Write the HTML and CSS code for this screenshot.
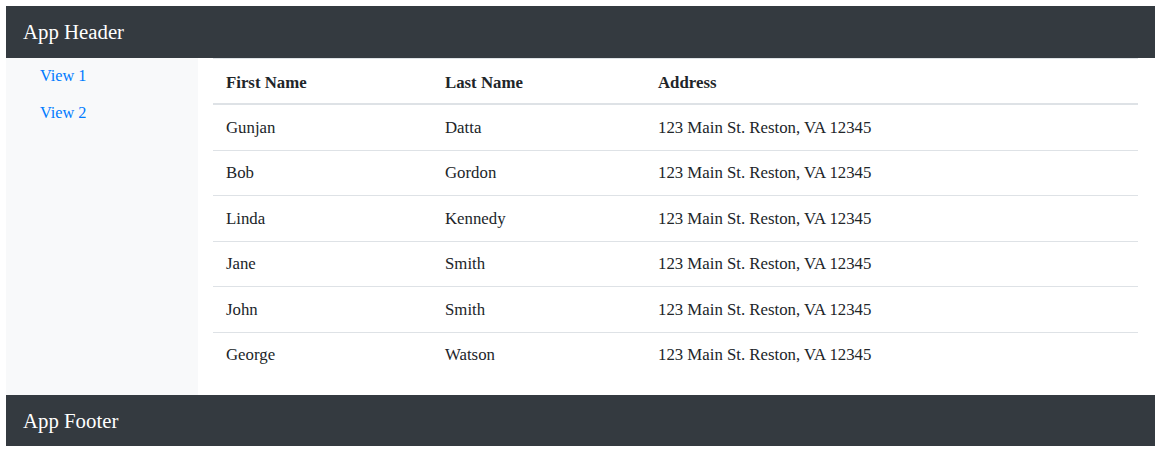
FILE: index.html
```html
<!DOCTYPE html>
<html lang="en">
<head>
<meta charset="utf-8">
<title>App</title>
<link rel="stylesheet" href="styles.css">
</head>
<body>
<div class="app">
  <header class="app-header">App Header</header>
  <div class="app-body">
    <nav class="sidebar">
      <a class="nav-link" href="#">View 1</a>
      <a class="nav-link" href="#">View 2</a>
    </nav>
    <main class="content">
      <table class="table">
        <thead>
          <tr><th class="col-first">First Name</th><th class="col-last">Last Name</th><th>Address</th></tr>
        </thead>
        <tbody>
          <tr><td>Gunjan</td><td>Datta</td><td>123 Main St. Reston, VA 12345</td></tr>
          <tr><td>Bob</td><td>Gordon</td><td>123 Main St. Reston, VA 12345</td></tr>
          <tr><td>Linda</td><td>Kennedy</td><td>123 Main St. Reston, VA 12345</td></tr>
          <tr><td>Jane</td><td>Smith</td><td>123 Main St. Reston, VA 12345</td></tr>
          <tr><td>John</td><td>Smith</td><td>123 Main St. Reston, VA 12345</td></tr>
          <tr><td>George</td><td>Watson</td><td>123 Main St. Reston, VA 12345</td></tr>
        </tbody>
      </table>
    </main>
  </div>
  <footer class="app-footer">App Footer</footer>
</div>
</body>
</html>
```
FILE: styles.css
```css
* { box-sizing: border-box; }
html, body { background: #fff; }
body {
  margin: 6px 4px 6px 6px;
  font-family: "Liberation Serif", "Times New Roman", serif;
  font-size: 16px;
  color: #212529;
}
.app { display: flex; flex-direction: column; }
.app-header, .app-footer {
  background: #343a40;
  color: #fff;
  font-size: 20.8px;
  display: flex;
  align-items: center;
  padding: 0 17px;
}
.app-header { height: 52px; }
.app-footer { height: 51px; }
.app-body { display: flex; }
.sidebar {
  width: 192px;
  flex: none;
  background: #f8f9fa;
  display: flex;
  flex-direction: column;
  padding-left: 17px;
}
.nav-link {
  display: block;
  padding: 8px 17px;
  font-size: 16.3px;
  line-height: 20.5px;
  color: #007bff;
  text-decoration: none;
}
.content {
  flex: 1;
  padding: 0 17px 18px 15px;
}
.table {
  width: 100%;
  border-collapse: collapse;
  color: #212529;
  font-size: 16.8px;
}
.table th, .table td {
  text-align: left;
  border-top: 1px solid #dee2e6;
  vertical-align: top;
}
.table th {
  padding: 13.5px 13px 10.5px;
  line-height: 20px;
  font-weight: bold;
  border-bottom: 2px solid #dee2e6;
}
.table td {
  padding: 12.5px 13px 11.5px;
  line-height: 20.5px;
}
.col-first { width: 219px; }
.col-last { width: 213px; }
```
